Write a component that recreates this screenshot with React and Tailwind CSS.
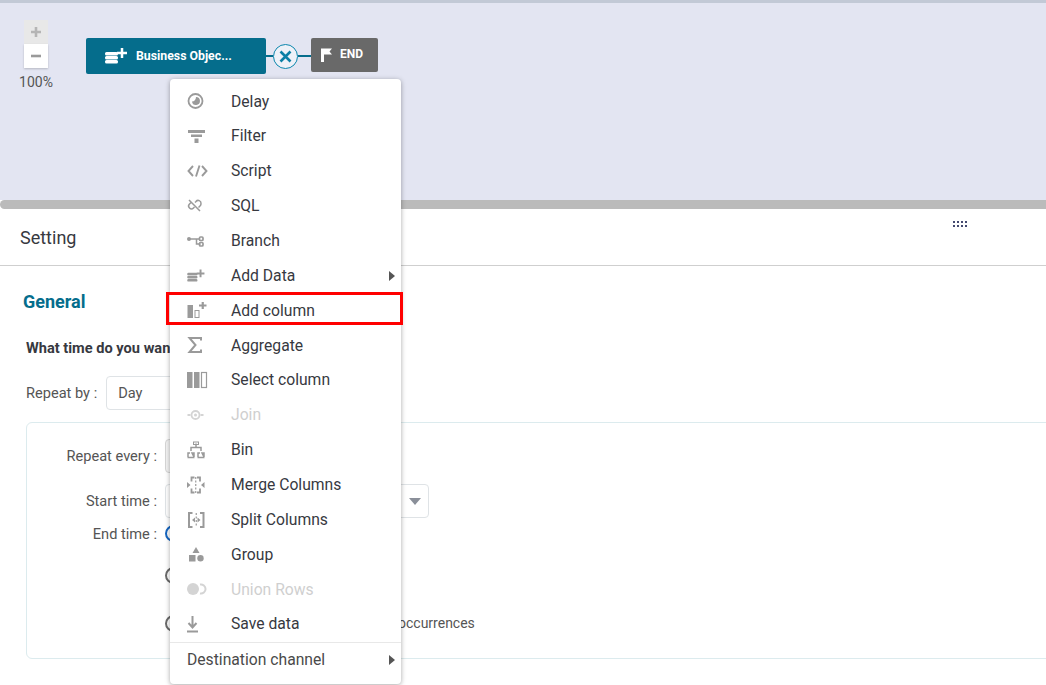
const C = "#9a9a9a";

const Svg = ({ children, fill = C }) => (
  <svg width="22" height="20" viewBox="0 0 22 20" fill={fill} className="shrink-0">
    {children}
  </svg>
);

const DataIcon = ({ color }) => (
  <>
    <rect x="1" y="6" width="13" height="3.400" rx="1.500" fill={color} />
    <rect x="1" y="10" width="13" height="3.400" rx="1.500" fill={color} />
    <rect x="1" y="14" width="13" height="3.400" rx="1.500" fill={color} />
    <path d="M13 7h10M18 2v10" stroke={color} strokeWidth="2.500" />
  </>
);

const icons = {
  delay: (
    <Svg>
      <circle cx="9.500" cy="10" r="7" fill="none" stroke={C} strokeWidth="1.800" />
      <path d="M10 6a4 4 0 1 1-4 4.500c2.300 0 4-2 4-4.500z" />
    </Svg>
  ),
  filter: (
    <Svg>
      <rect x="2" y="4" width="17" height="3" />
      <rect x="5" y="8.500" width="11" height="2.500" />
      <rect x="8.500" y="12.500" width="4" height="4.500" />
    </Svg>
  ),
  script: (
    <Svg fill="none">
      <path d="M7 5l-4.500 5L7 15M13.500 4.500L10 15.500M16 5l4.500 5-4.500 5" stroke={C} strokeWidth="1.900" />
    </Svg>
  ),
  sql: (
    <Svg fill="none">
      <path d="M5 6.500l-1.500 1.500a2.800 2.800 0 0 0 4 4l1-1M9 6.500l1-1a2.800 2.800 0 0 1 5 2 3 3 0 0 1-1 2.500l-1.500 1.500M3 4l11 11" stroke={C} strokeWidth="1.500" />
    </Svg>
  ),
  branch: (
    <Svg fill="none">
      <circle cx="3" cy="8" r="2" fill={C} />
      <path d="M4 8h10M10.500 8v5h4" stroke={C} strokeWidth="1.500" />
      <rect x="13.500" y="6" width="3.500" height="3.500" rx="1" stroke={C} strokeWidth="1.700" />
      <rect x="13.500" y="11.500" width="3.500" height="3.500" rx="1" stroke={C} strokeWidth="1.700" />
    </Svg>
  ),
  addData: (
    <Svg>
      <g transform="translate(0.500,2) scale(0.78)">
        <DataIcon color={C} />
      </g>
    </Svg>
  ),
  addColumn: (
    <Svg>
      <rect x="1.500" y="5" width="5.500" height="13" />
      <rect x="9" y="10.500" width="4" height="7" fill="none" stroke={C} strokeWidth="1" />
      <path d="M13 5.500h7.500M16.750 2v7" stroke={C} strokeWidth="2.200" />
    </Svg>
  ),
  aggregate: (
    <Svg fill="none">
      <path d="M15 5.500V3H3.500l6 7-6 7H15v-2.500" stroke={C} strokeWidth="2" />
    </Svg>
  ),
  selectColumn: (
    <Svg>
      <rect x="1" y="2" width="5.500" height="16" />
      <rect x="8" y="2" width="5.500" height="16" />
      <rect x="15.500" y="2.500" width="5" height="15" fill="none" stroke={C} strokeWidth="1.200" />
    </Svg>
  ),
  join: (
    <Svg fill="none">
      <circle cx="9.500" cy="10" r="4" stroke="#d4d4d4" strokeWidth="1.800" />
      <circle cx="9.500" cy="10" r="1.500" fill="#d4d4d4" />
      <path d="M1.500 10h3M14.500 10h3" stroke="#d4d4d4" strokeWidth="2" />
    </Svg>
  ),
  bin: (
    <Svg fill="none">
      <path d="M10 3.500v4M5 11V7.500h10V11M2 17v-4h2M6 13h2v4zM12 17v-4h2M16 13h2v4zM1.500 17.500h7M11.500 17.500h7" stroke={C} strokeWidth="1.500" />
      <rect x="7.500" y="2" width="5" height="2.500" stroke={C} />
    </Svg>
  ),
  merge: (
    <Svg fill="none">
      <path d="M8.500 2.500H5.500v4M8.500 17.500H5.500v-4M11 2.500h3v4M11 17.500h3v-4" stroke={C} strokeWidth="1.800" />
      <path d="M9.750 2v16" stroke={C} strokeWidth="1.200" strokeDasharray="2 1.500" />
      <path d="M1 7l3.500 3L1 13zM18.500 7L15 10l3.500 3z" fill={C} />
    </Svg>
  ),
  split: (
    <Svg fill="none">
      <path d="M6.500 3H3v14h3.500M14 3h3.500v14H14" stroke={C} strokeWidth="2" />
      <path d="M10.250 3v14" stroke={C} strokeWidth="1.200" strokeDasharray="2 1.500" />
      <path d="M9 7.500L6 10l3 2.500zM11.500 7.500l3 2.500-3 2.500z" fill={C} />
    </Svg>
  ),
  group: (
    <Svg>
      <path d="M10 3l3.500 6h-7z" />
      <rect x="3" y="11" width="6.500" height="6.500" />
      <circle cx="14.500" cy="14.300" r="3.200" />
    </Svg>
  ),
  union: (
    <Svg fill="none">
      <circle cx="7" cy="10" r="6" fill="#d4d4d4" />
      <path d="M14 5.500a4.600 4.600 0 1 1 0 9" stroke="#d4d4d4" strokeWidth="2" />
    </Svg>
  ),
  save: (
    <Svg fill="none">
      <path d="M6.500 2v11M2.500 9l4 4.500 4-4.500M1 17.500h11" stroke={C} strokeWidth="2" />
    </Svg>
  ),
};

const items = [
  { label: "Delay", icon: icons.delay },
  { label: "Filter", icon: icons.filter },
  { label: "Script", icon: icons.script },
  { label: "SQL", icon: icons.sql },
  { label: "Branch", icon: icons.branch },
  { label: "Add Data", icon: icons.addData, arrow: true },
  { label: "Add column", icon: icons.addColumn, highlight: true },
  { label: "Aggregate", icon: icons.aggregate },
  { label: "Select column", icon: icons.selectColumn },
  { label: "Join", icon: icons.join, disabled: true },
  { label: "Bin", icon: icons.bin },
  { label: "Merge Columns", icon: icons.merge },
  { label: "Split Columns", icon: icons.split },
  { label: "Group", icon: icons.group },
  { label: "Union Rows", icon: icons.union, disabled: true },
  { label: "Save data", icon: icons.save },
];

const Arrow = () => (
  <span className="absolute right-[6px] top-1/2 -translate-y-1/2 border-y-[5px] border-l-[6px] border-y-transparent border-l-[#555]" />
);

const Menu = () => (
  <div className="absolute left-[170px] top-[79px] z-10 h-[605px] w-[231px] rounded-[4px] bg-white pt-[4.9px] text-[15.7px] text-[#37393f] shadow-[0_1px_5px_rgba(0,0,0,0.35)]">
    {items.map((item) => (
      <div key={item.label} className="relative flex h-[34.87px] items-center pl-[16px]">
        {item.icon}
        <span className={`ml-[23px] ${item.disabled ? "text-[#cfcfcf]" : ""}`}>{item.label}</span>
        {item.arrow && <Arrow />}
        {item.highlight && (
          <span className="absolute -left-[4px] -right-[2px] -top-[1px] h-[33px] border-[3px] border-[#f00]" />
        )}
      </div>
    ))}
    <div className="relative flex h-[36px] items-center border-t border-[#e8e8e8] pl-[17px] text-[#4a4a4a]">
      Destination channel
      <Arrow />
    </div>
  </div>
);

const Canvas = () => (
  <div className="flex h-[200px] border-t-[3px] border-[#c2c9d6] bg-[#e3e5f2]">
    <div className="ml-[20px] mt-[17px] flex w-[32px] flex-col items-center">
      <div className="flex h-[24px] w-[24px] items-center justify-center bg-[#e8e8e8] text-[#b5b5b5]">
        <svg width="12" height="12" viewBox="0 0 12 12"><path d="M6 1v10M1 6h10" stroke="currentColor" strokeWidth="2.600" /></svg>
      </div>
      <div className="flex h-[24px] w-[24px] items-center justify-center bg-white text-[#9a9a9a] shadow-[0_1px_2px_rgba(0,0,0,0.2)]">
        <svg width="12" height="12" viewBox="0 0 12 12"><path d="M1 6h10" stroke="currentColor" strokeWidth="2.600" /></svg>
      </div>
      <span className="mt-[6px] text-[14px] leading-[16px] text-[#555]">100%</span>
    </div>
    <div className="ml-[34px] mt-[35px] flex h-[36px] items-center">
      <div className="flex h-[36px] w-[180px] items-center rounded-[2px] bg-[#056d8c] pl-[18px] text-[12.300px] font-bold text-white">
        <svg width="24" height="20" viewBox="0 0 24 20" className="shrink-0"><DataIcon color="#fff" /></svg>
        <span className="ml-[8px]">Business Objec...</span>
      </div>
      <div className="h-[2px] w-[7px] bg-[#056d8c]" />
      <div className="flex h-[25px] w-[25px] items-center justify-center rounded-full border-[1.500px] border-[#0b86ad] bg-[#eef1f8]">
        <svg width="13" height="13" viewBox="0 0 13 13"><path d="M1.500 1.500l10 10M11.500 1.500l-10 10" stroke="#0b7fa6" strokeWidth="2.600" /></svg>
      </div>
      <div className="h-[2px] w-[13px] bg-[#056d8c]" />
      <div className="mb-[2px] flex h-[34px] w-[67px] items-center rounded-[2px] bg-[#696969] pl-[10px] text-[12px] font-bold text-white">
        <svg width="12" height="14" viewBox="0 0 12 14" className="shrink-0"><path d="M0 0.500h11l-2.500 3 2.500 3H3V14H0z" fill="#fff" /></svg>
        <span className="mb-[2px] ml-[7px]">END</span>
      </div>
    </div>
  </div>
);

const Radio = ({ active, className }) => (
  <span className={`block h-[17px] w-[17px] rounded-full border-2 ${active ? "border-[#1565c0]" : "border-[#6a6a6a]"} ${className}`} />
);

const Label = ({ children, className = "" }) => (
  <span className={`mt-[2px] w-[130px] shrink-0 text-right text-[14.600px] text-[#555] ${className}`}>{children}</span>
);

const Settings = () => (
  <div className="relative bg-white">
    <div className="relative flex h-[57px] items-center border-b border-[#cfcfcf] pl-[20px] text-[18px] text-[#37393f]">
      Setting
      <div className="absolute left-[953px] top-[12px] grid grid-cols-4 gap-x-[2px] gap-y-[2px]">
        {Array.from({ length: 8 }).map((_, i) => (
          <span key={i} className="block h-[2px] w-[2px] bg-[#444a70]" />
        ))}
      </div>
    </div>
    <div className="pl-[26px]">
      <h2 className="-ml-[3px] mt-[24px] text-[18px] font-bold leading-[24px] text-[#056d8c]">General</h2>
      <p className="mt-[25px] text-[14.600px] font-bold leading-[18px] text-[#37393f]">What time do you want to run?</p>
      <div className="mt-[19px] flex h-[34px] items-center">
        <span className="mt-[2px] text-[14.600px] text-[#555]">Repeat by :</span>
        <div className="ml-[9px] flex h-[34px] w-[250px] items-center rounded-[4px] border border-[#dfe3e6] pl-[11px] pt-[2px] text-[14.600px] text-[#555]">Day</div>
      </div>
      <div className="mt-[12px] h-[237px] w-[1100px] rounded-[6px] border border-[#dcebee] pt-[16px]">
        <div className="flex h-[34px] items-center">
          <Label>Repeat every :</Label>
          <div className="ml-[8px] h-[34px] w-[100px] rounded-[4px] border border-[#d5d5d5] bg-[#f3f3f3]" />
        </div>
        <div className="mt-[11px] flex h-[34px] items-center">
          <Label>Start time :</Label>
          <div className="relative ml-[8px] h-[34px] w-[264px] rounded-[4px] border border-[#dfe3e6]">
            <span className="absolute right-[7px] top-[13px] border-x-[6px] border-t-[7px] border-x-transparent border-t-[#8a8f99]" />
          </div>
        </div>
        <div className="mt-[5px] flex items-start">
          <Label className="!mt-[1px] leading-[20px]">End time :</Label>
          <div className="ml-[8px] flex flex-col pt-[2px]">
            <Radio active />
            <Radio className="mt-[25px]" />
            <div className="mt-[29px] flex items-center">
              <Radio />
              <span className="ml-[216px] text-[14px] text-[#555]">occurrences</span>
            </div>
          </div>
        </div>
      </div>
      <p className="mt-[22px] pl-[60px] text-[14.600px] font-bold text-[#37393f]">Notification settings</p>
    </div>
  </div>
);

export default function App() {
  return (
    <div className="relative h-[685px] w-full overflow-hidden bg-white font-['Roboto',sans-serif]">
      <Canvas />
      <div className="h-[9px] rounded-l-[5px] bg-[#bbbbbb]" />
      <Settings />
      <Menu />
    </div>
  );
}
